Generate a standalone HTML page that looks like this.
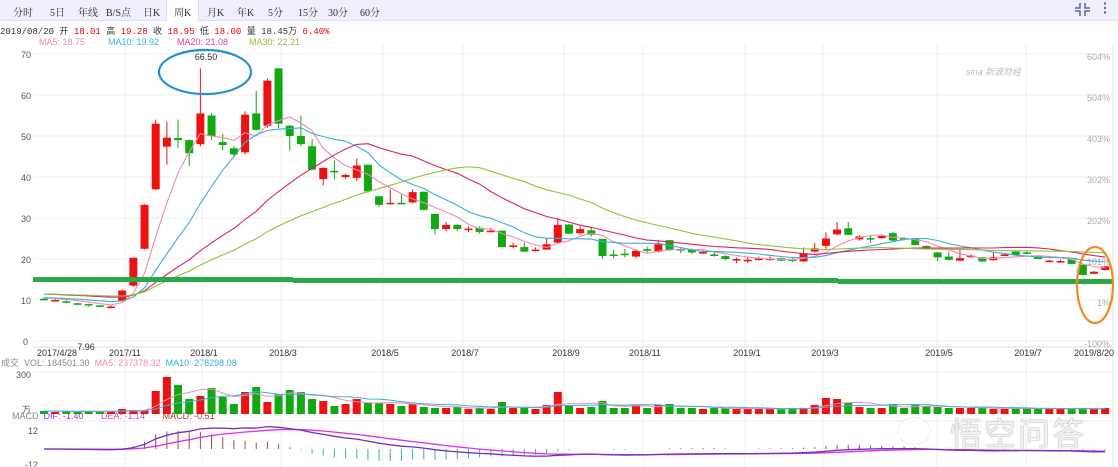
<!DOCTYPE html>
<html><head><meta charset="utf-8"><style>
body{margin:0;width:1118px;height:467px;overflow:hidden;background:#fff;font-family:"Liberation Sans","Noto Sans CJK SC",sans-serif}
#tb{position:absolute;left:0;top:0;width:1118px;height:20px;background:#eef0fb;border-bottom:1px solid #dde0f0}
#tb span{position:absolute;top:4px;font-size:10px;color:#333;font-family:"Liberation Serif","Noto Serif CJK SC",serif}
#act{position:absolute;left:166px;top:0;width:31px;height:21px;background:#fff;border-left:1px solid #dde0f0;border-right:1px solid #dde0f0}
.t{position:absolute;font-size:9px;white-space:nowrap}
svg{position:absolute;left:0;top:0}
</style></head><body>
<div id="tb"><div id="act"></div>
<span style="left:13px">分时</span><span style="left:50px">5日</span><span style="left:78px">年线</span><span style="left:106px">B/S点</span><span style="left:143px">日K</span><span style="left:174px">周K</span><span style="left:207px">月K</span><span style="left:237px">年K</span><span style="left:268px">5分</span><span style="left:298px">15分</span><span style="left:328px">30分</span><span style="left:360px">60分</span>
</div>
<div class="t" style="left:0;top:24px;color:#333;font-family:'Liberation Mono','Noto Sans CJK SC',monospace;font-size:9px">2019/08/20 开 <b style="color:#e00;font-weight:normal">18.01</b> 高 <b style="color:#e00;font-weight:normal">19.28</b> 收 <b style="color:#e00;font-weight:normal">18.95</b> 低 <b style="color:#e00;font-weight:normal">18.00</b> 量 18.45万 <b style="color:#e00;font-weight:normal">6.40%</b></div>
<div class="t" style="left:39px;top:37px;color:#f08cb4">MA5: 18.75</div>
<div class="t" style="left:108px;top:37px;color:#3ab0d8">MA10: 19.92</div>
<div class="t" style="left:177px;top:37px;color:#e0409a">MA20: 21.08</div>
<div class="t" style="left:249px;top:37px;color:#8cc43c">MA30: 22.21</div>
<div class="t" style="left:1px;top:356px;color:#888">成交 &nbsp;VOL: 184501.30 <span style="color:#f08cb4">&nbsp;MA5: 237378.32</span> <span style="color:#3ab0d8">&nbsp;MA10: 278298.08</span></div>
<div class="t" style="left:12px;top:411px;color:#888">MACD <span style="color:#9a30e0">&nbsp;DIF: -1.40</span> <span style="color:#e040c0">&nbsp;&nbsp;&nbsp;&nbsp;&nbsp;&nbsp;DEA: -1.14</span> <span style="color:#b03030">&nbsp;&nbsp;&nbsp;&nbsp;&nbsp;&nbsp;MACD: -0.51</span></div>
<svg id="s" width="1118" height="467"></svg>
<div class="t" style="left:950px;top:409px;font-size:32px;color:rgba(255,255,255,0.85);text-shadow:0 0 1px #999,0 0 1px #999;letter-spacing:2px">悟空问答</div>
<div class="t" style="left:898px;top:418px;width:26px;height:20px;border:3px solid rgba(255,255,255,0.85);border-radius:50%;box-shadow:0 0 1px #999"></div>
<script>
var D=[[10.3,10.1,10.6,9.9],[10.0,10.0,10.2,9.9],[9.7,9.4,9.9,9.2],[9.2,9.0,9.3,8.8],[9.0,8.8,9.1,8.4],[8.7,8.4,8.8,8.2],[8.2,8.4,8.6,7.96],[9.8,12.3,12.6,9.6],[13.5,20.3,20.3,13.2],[22.5,33.2,33.4,22.3],[37,53,54,36.8],[47.4,49.6,53.5,43],[49.5,49.0,54,47],[49.0,45.8,49.2,42.7],[48,55.5,66.5,47.5],[55,50,55.6,49],[48.5,47.8,50.5,46.5],[47,45.5,47.5,45],[46,55.2,56,45.5],[55.5,51.5,61,51.3],[52.5,63.5,64,52],[66.5,53,66.5,52],[52.5,50,52.7,46.5],[50,48,55,47.5],[47.5,41.8,49.3,41.6],[39.5,42.2,42.4,38],[41.5,41.3,44,39.5],[40,40.5,40.8,39.5],[39.8,42.8,44.5,39],[43,36.5,43,36.3],[35.3,33.2,35.3,32.7],[33.5,33.7,37,33.3],[33.7,33.5,36,33.3],[33.8,36.3,37,33.6],[36.4,32,36.5,31.8],[31,27.3,31,26],[27.3,28.3,29,26.8],[28.3,27.3,28.5,26.8],[27.2,27.4,28,26.5],[27.6,26.6,28,26.2],[26.7,26.9,27.6,26.4],[26.9,22.9,27,22.8],[23.1,23.3,24,22.6],[22.9,21.8,24,21.7],[22.1,22.3,22.8,21.8],[22.3,23.6,25,22.2],[24,28.3,30,23.8],[28.4,26.2,28.6,26],[26.3,27.3,28,25.8],[27,25.9,27.6,25.5],[24.9,20.7,24.9,20],[21.1,21,22.3,20.2],[21.3,21.2,22.4,20.4],[20.6,22,22.4,20.2],[22.4,22,23,21.5],[21.8,23.6,24.4,21.6],[24.6,22.2,24.6,22],[22.4,22.2,23,21.5],[22.2,21.6,22.6,21.2],[21.5,21.7,22.3,21.2],[21.1,21,21.7,20.6],[20.7,20,20.9,19.7],[19.8,20,20.3,19],[19.7,19.8,20.4,19],[19.9,20.1,20.6,19.6],[19.9,20.1,20.6,19.6],[20.2,19.6,20.4,19.4],[19.9,19.6,20.2,19.2],[19.4,21.4,22.8,19.3],[21.8,22.6,23.9,21.6],[23.2,25,26.5,22.5],[26,27.2,29,25.8],[27.5,25.9,29,25.8],[24.8,25.5,25.8,24.5],[25.1,25,25.8,24],[25.1,25.6,25.8,24.9],[26.3,24.5,26.6,24.3],[25.1,25,25.4,24.5],[25,23.4,25.1,23.3],[23.2,22.6,23.3,22.4],[21.6,20.4,21.7,19.5],[20.6,19.8,21.8,19.6],[19.6,20.2,22.2,19.5],[20.6,20.8,21.2,20.3],[20.4,19.4,20.5,19.3],[19.7,20.4,21.6,19.6],[20.9,21.1,21.3,20.7],[21.8,21,22,20.9],[21.6,21.5,22,21.2],[20.8,20,21,19.9],[19.4,19.6,19.8,19.2],[19.3,19.5,19.8,19.1],[19.9,18.8,20,18.7],[18.6,16.1,18.7,16],[16.4,16.9,17.1,16.3],[17.3,18.2,18.4,17.2]];
var VH=[3,2,3,2,3,2,3,5,4,4,23,37,29,15,18,26,17,10,22,27,12,20,24,22,15,13,8,10,15,11,11,10,8,10,7,6,6,7,5,6,5,12,6,6,5,9,22,9,6,7,13,6,6,9,6,9,10,6,6,5,6,6,5,5,5,5,5,6,6,9,16,15,11,7,6,6,10,6,9,8,7,6,6,6,6,5,5,6,6,5,5,5,5,6,5,6];
var s='',N=D.length,X=i=>44+i*11.17,Y=p=>341-4.1*p;
var g='#ececec';
for(var p=0;p<=70;p+=10)s+=`<line x1="33" x2="1113" y1="${Y(p)}" y2="${Y(p)}" stroke="${g}"/>`;
var vx=[125,202,281,383,463,564,643,745,823,937,1026];
vx.forEach(x=>{s+=`<line x1="${x}" x2="${x}" y1="45" y2="467" stroke="${g}"/>`});
s+=`<line x1="1113" x2="1113" y1="45" y2="467" stroke="#e4e4e4"/><line x1="33" x2="1113" y1="347" y2="347" stroke="#ddd"/><line x1="33" x2="1113" y1="372" y2="372" stroke="${g}"/><line x1="33" x2="1113" y1="421" y2="421" stroke="${g}"/>`;
[70,60,50,40,30,20,10,0].forEach(p=>{s+=`<text x="${p?31:28}" y="${Y(p)+4}" font-size="9" fill="#555" text-anchor="end">${p}</text>`});
['604%','504%','403%','302%','202%','101%','1%','-100%'].forEach((t,k)=>{s+=`<text x="1110" y="${Y(70-k*10)+6}" font-size="9" fill="#aaa" text-anchor="end">${t}</text>`});
var dl=[[57,'2017/4/28'],[125,'2017/11'],[204,'2018/1'],[283,'2018/3'],[385,'2018/5'],[465,'2018/7'],[566,'2018/9'],[645,'2018/11'],[747,'2019/1'],[825,'2019/3'],[939,'2019/5'],[1028,'2019/7'],[1094,'2019/8/20']];
dl.forEach(d=>{s+=`<text x="${d[0]}" y="356" font-size="9" fill="#333" text-anchor="middle">${d[1]}</text>`});
s+=`<text x="966" y="75" font-size="9" fill="#bbb" font-style="italic">sina 新浪财经</text>`;
// candles
var cl=D.map(d=>d[1]);
D.forEach((d,i)=>{var up=d[1]>=d[0],c=up?'#ee1111':'#12a812',x=X(i);
var t=Y(Math.max(d[0],d[1])),b=Y(Math.min(d[0],d[1]));if(b-t<1.5)b=t+1.5;
s+=`<line x1="${x}" x2="${x}" y1="${Y(d[2])}" y2="${Y(d[3])}" stroke="${c}"/><rect x="${x-4}" y="${t}" width="8" height="${b-t}" fill="${c}"/>`;
var h=VH[i]||4;s+=`<rect x="${x-4}" y="${414-h}" width="8" height="${h}" fill="${c}"/>`;});
function ma(n){var pts=[];for(var i=0;i<N;i++){var a=0;for(var k=0;k<n;k++){var j=i-k;a+=j<0?(n>10?11.5:10.6):cl[j];}pts.push(X(i)+','+Y(a/n).toFixed(1));}return pts.join(' ');}
[[5,'#f08cb4'],[10,'#3ab0d8'],[20,'#e0206a'],[30,'#8cc43c']].forEach(m=>{s+=`<polyline points="${ma(m[0])}" fill="none" stroke="${m[1]}" stroke-width="1.1"/>`});
function vma(n,col){var pts=[];for(var i=0;i<N;i++){var a=0;for(var k=0;k<n;k++){var j=i-k;a+=j<0?3:VH[j];}pts.push(X(i)+','+(414-a/n).toFixed(1));}s+=`<polyline points="${pts.join(' ')}" fill="none" stroke="${col}"/>`;}
vma(5,'#f08cb4');vma(10,'#3ab0d8');
s+=`<text x="31" y="378" font-size="9" fill="#555" text-anchor="end">300</text><text x="31" y="413" font-size="9" fill="#555" text-anchor="end">万</text>`;
s+=`<text x="38" y="434" font-size="9" fill="#555" text-anchor="end">12</text><text x="38" y="468" font-size="9" fill="#555" text-anchor="end">-12</text>`;
// macd
var e12=cl[0],e26=cl[0],dea=0,P1=[],P2=[];
cl.forEach((c,i)=>{e12=e12*11/13+c*2/13;e26=e26*25/27+c*2/27;var dif=e12-e26;dea=dea*0.8+dif*0.2;var y0=449,k=1.9;
P1.push(X(i)+','+(y0-dif*k).toFixed(1));P2.push(X(i)+','+(y0-dea*k).toFixed(1));var m=2*(dif-dea);
if(Math.abs(m)>0.3)s+=`<line x1="${X(i)}" x2="${X(i)}" y1="${y0}" y2="${(y0-m*k).toFixed(1)}" stroke="${m>0?'#b04040':'#30b8a0'}"/>`;});
s+=`<polyline points="${P2.join(' ')}" fill="none" stroke="#e030e0" stroke-width="1.3"/><polyline points="${P1.join(' ')}" fill="none" stroke="#7030c0" stroke-width="1.3"/>`;
s+=`<text x="86" y="350" font-size="9" fill="#333" text-anchor="middle">7.96</text><text x="206" y="60" font-size="9" fill="#333" text-anchor="middle">66.50</text>`;
// green lines
s+=`<rect x="33" y="277" width="260" height="5" fill="#2aa84a"/><rect x="293" y="278" width="545" height="5" fill="#2aa84a"/><rect x="838" y="279" width="275" height="5" fill="#2aa84a"/>`;
s+=`<ellipse cx="205" cy="72" rx="46" ry="22" fill="none" stroke="#1e90d6" stroke-width="2.2"/><ellipse cx="1095" cy="285" rx="18" ry="38" fill="none" stroke="#f08a24" stroke-width="2.2"/>`;
// icons
s+=`<g stroke="#5560c0" stroke-width="1.5" fill="none"><path d="M1080 3v5h-5M1085 3v5h5M1080 16v-5h-5M1085 16v-5h5"/></g><g fill="#5560c0"><circle cx="1105" cy="3.5" r="1.2"/><circle cx="1105" cy="8" r="1.2"/><circle cx="1105" cy="12.5" r="1.2"/></g>`;
document.getElementById('s').innerHTML=s;
</script>
</body></html>
